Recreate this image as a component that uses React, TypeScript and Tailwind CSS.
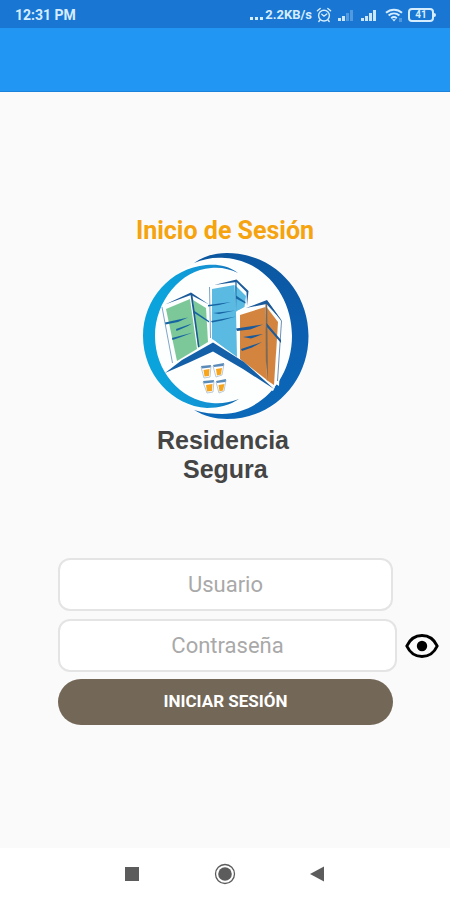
import { useState } from 'react';

function AlarmIcon() {
  return (
    <svg viewBox="0 0 16 16" className="h-4 w-4" fill="none" stroke="currentColor" strokeWidth="1.4" strokeLinecap="round">
      <circle cx="8" cy="8.6" r="5.4" />
      <path d="M1.4 3.8 4.2 1.5M14.6 3.8 11.8 1.5M3.8 13.2 2.8 14.5M12.2 13.2l1 1.3" />
      <path d="M5.8 7.2 8 9.2l2.8-2.2" />
    </svg>
  );
}

function SignalIcon({ level }: { level: number }) {
  const bars = [
    { x: 0, h: 3 },
    { x: 4, h: 5 },
    { x: 8, h: 8 },
    { x: 12, h: 11 },
  ];

  return (
    <svg viewBox="0 0 16 12" className="h-3 w-4" fill="currentColor">
      {bars.map((bar, i) => (
        <rect key={bar.x} x={bar.x} y={12 - bar.h} width="3" height={bar.h} opacity={i < level ? 0.95 : 0.3} />
      ))}
    </svg>
  );
}

function WifiIcon() {
  return (
    <svg viewBox="0 0 18 14" className="h-[14px] w-[18px]" fill="none" stroke="currentColor" strokeWidth="2">
      <path d="M1 4.8c4.6-4.2 11.4-4.2 16 0" />
      <path d="M3.6 7.6c3.2-2.8 7.6-2.8 10.8 0" />
      <path d="M6.2 10.2c1.7-1.4 3.9-1.4 5.6 0" />
      <path d="M7 11.2 9 13.6l2-2.4z" fill="currentColor" stroke="none" />
      <path d="M14 11h3M14 13h3" strokeWidth="1" opacity=".6" />
    </svg>
  );
}

function Battery({ percent }: { percent: number }) {
  return (
    <span className="flex items-center">
      <span className="flex h-[14px] w-[26px] items-center justify-center rounded-[4px] border-2 border-current text-[10px] leading-none font-bold">
        {percent}
      </span>
      <span className="h-1 w-[2px] rounded-r bg-current" />
    </span>
  );
}

function StatusBar() {
  return (
    <div className="flex h-7 items-center justify-between bg-[#1976d2] pt-[2px] pr-[14px] pl-[15px] text-[#d6edff]">
      <span className="text-[14px] leading-4 font-bold">12:31 PM</span>
      <div className="flex items-center gap-1">
        <span className="flex items-center">
          <svg viewBox="0 0 16 14" className="h-[14px] w-4" fill="currentColor">
            <path d="M1 9h3v3H1zM6 9h3v3H6zM11 9h3v3h-3z" />
          </svg>
          <span className="text-[13px] leading-4 font-bold">2.2KB/s</span>
        </span>
        <AlarmIcon />
        <span className="flex gap-[7px] pl-[2px]">
          <SignalIcon level={2} />
          <SignalIcon level={4} />
        </span>
        <span className="flex items-center gap-[5px] pl-1">
          <WifiIcon />
          <Battery percent={41} />
        </span>
      </div>
    </div>
  );
}

function Logo() {
  return (
    <svg viewBox="139 250 172 172" className="h-[172px] w-[172px]" aria-hidden="true">
      <defs>
        <linearGradient id="leftRing" x1="0" y1="0" x2="1" y2="0">
          <stop offset="0.2" stopColor="#0ba3dc" />
          <stop offset="0.75" stopColor="#1590d2" />
          <stop offset="1" stopColor="#0c5da8" />
        </linearGradient>
        <linearGradient id="rightRing" x1="0" y1="0" x2="0" y2="1">
          <stop offset="0" stopColor="#0b569f" />
          <stop offset="0.5" stopColor="#0c60b2" />
          <stop offset="1" stopColor="#0b68b8" />
        </linearGradient>
      </defs>

      <circle cx="226" cy="336" r="79" fill="#fdfefe" />

      {/* rings */}
      <path
        d="M238 273C227 265 217 264 206 265C171 268 143 299 143 336C143 374 172 406 207 408C219 408 230 405 239 399C228 403 220 404 212 403C180 400 155 371 155 336C155 301 181 270 211 268C221 267 230 269 238 273Z"
        fill="url(#leftRing)"
      />
      <path
        d="M194 263C204 256 215 253 227 253C273 253 308.5 290 308.5 336C308.5 382 273 419 227 419C215 419 204 416 194 410C204 413 213 414 222 414C262 413 292 378 292 336C292 294 262 260 225 258C213 257 204 259 194 263Z"
        fill="url(#rightRing)"
      />

      {/* green building */}
      <path d="M166 309 190 299 197 349 177 361Z" fill="#7cc899" />
      <path d="M193 300 206 308 208 342 198 348Z" fill="#7cc899" />
      <path d="M165 304.5 191 292.5 209 304.5 191 295Z" fill="#1b5a9b" />
      <path d="M190.3 293 192.3 294 199.5 347 198 347Z" fill="#1a5a96" />
      <path d="M162 307 172.5 363" fill="none" stroke="#5d8fbd" strokeWidth=".8" />
      <path d="M193 310 209 321V322.5L193.5 312.5Z" fill="#1764a3" />
      <path d="M165 322.5 188 317.5 178 322 165.5 324.5Z" fill="#1764a3" />
      <path d="M176 329 192 323.5 188 326 176.5 331Z" fill="#1764a3" />
      <path d="M172 338 193 332.5 181 337 172.5 340Z" fill="#1764a3" />

      {/* blue building */}
      <path d="M212 289 234.5 285 236 312 237 357 212 339Z" fill="#5abae2" />
      <path d="M235 285 246 296 244.5 307 235.5 312Z" fill="#5abae2" />
      <path d="M214 285 236.5 279.5 248.5 291 247 306 246.5 292 236.5 282Z" fill="#1b5a9b" />
      <path d="M209.5 287 210.5 338" fill="none" stroke="#5d8fbd" strokeWidth=".8" />
      <path d="M235.3 281 236.7 281 236 312Z" fill="#1764a3" />
      <path d="M236 295.5 245.5 302V303.5L236 298.5Z" fill="#1764a3" />
      <path d="M208 305 231 302 219 305 208 306.5Z" fill="#1764a3" />
      <path d="M213 313 235 310.5 219 314Z" fill="#1764a3" />
      <path d="M211 321 236 316.5 222 320.5 212 322.5Z" fill="#1764a3" />

      {/* orange building */}
      <path d="M237 311 267 298 283 320 279 386 237 359Z" fill="#fdfefe" />
      <path d="M240 315 265.5 307 267 380 240 359Z" fill="#d3853f" />
      <path d="M266.5 307 278 322 274 385 266.5 380Z" fill="#d3853f" />
      <path d="M267 301 281.5 321 277.5 381" fill="none" stroke="#5c82aa" strokeWidth=".9" />
      <path d="M246 308 267 300 282 321 266.5 304Z" fill="#1b5a9b" />
      <path d="M265.5 304 267.2 304 268 381 265.8 360Z" fill="#7c6a58" />
      <path d="M266.5 323 281 340V343L267 327Z" fill="#1b5a9b" />
      <path d="M236 328.5 263 324.5 250 329.5 237 331Z" fill="#1b5a9b" />
      <path d="M243 337 263 334 251 338.5Z" fill="#1b5a9b" />
      <path d="M241 349 262 342 252 347.5 242 351Z" fill="#1b5a9b" />

      {/* roof */}
      <path d="M166 371 213 339.500 275 387 273 391 214 360 168 376Z" fill="#fdfefe" />
      <path d="M165 373 182 360 213 342.5 244 362 274 389 243 369 213 351.5 188 363Z" fill="#135fa8" />

      {/* windows */}
      <g fill="#fff" stroke="#a9bccb" strokeWidth=".8">
        <path d="M201 367 211 366 210 377 204 378Z" />
        <path d="M213 366 224 364 222 375 216 377Z" />
        <path d="M203 382 214 381 213 392 207 393Z" />
        <path d="M216 382 226 380 224 391 219 393Z" />
      </g>
      <path
        d="M201 366 211 365 210.5 367.5 202 368.5ZM213 365 224 363 223.5 366 214 367ZM203 381 214 380 213.5 382.5 204 383.5ZM216 381 226 379 225.5 382 217 383Z"
        fill="#5a8bb8"
      />
      <path
        d="M203.5 370 209.5 369 209 376 204.5 376.5ZM216 369 222 368 221 374.5 217 375.5ZM206 385 212.5 384 212 391 207 391.5ZM218.5 385 224.5 384 223 390.5 219.5 391.5Z"
        fill="#f6a51c"
      />
    </svg>
  );
}

function EyeIcon() {
  return (
    <svg viewBox="0 0 34 26" className="h-[26px] w-[34px]" fill="none">
      <path
        d="M1.8 13C5 6 10.5 2.5 17 2.5S29 6 32.2 13C29 20 23.5 23.5 17 23.5S5 20 1.8 13Z"
        stroke="#000"
        strokeWidth="3"
        strokeLinejoin="round"
      />
      <circle cx="17" cy="13" r="5.2" fill="#000" />
    </svg>
  );
}

function LoginForm() {
  const [showPassword, setShowPassword] = useState(false);

  return (
    <form className="mt-[74px] w-full pr-[11px] pl-[58px]" onSubmit={(e) => e.preventDefault()}>
      <div className="mb-2 pr-[46px]">
        <input
          type="text"
          aria-label="Usuario"
          placeholder="Usuario"
          className="block h-[53px] w-full rounded-[12px] border-2 border-[#e4e4e4] bg-white text-center text-[22px] text-[#444] outline-none placeholder:text-[#a9a9a9]"
        />
      </div>
      <div className="mb-[7px] flex items-center gap-2">
        <input
          type={showPassword ? 'text' : 'password'}
          aria-label="Contraseña"
          placeholder="Contraseña"
          className="block h-[53px] min-w-0 flex-1 rounded-[12px] border-2 border-[#e4e4e4] bg-white text-center text-[22px] text-[#444] outline-none placeholder:text-[#a9a9a9]"
        />
        <button type="button" aria-label="Mostrar contraseña" onClick={() => setShowPassword(!showPassword)}>
          <EyeIcon />
        </button>
      </div>
      <div className="pr-[46px]">
        <button type="submit" className="h-[46px] w-full rounded-full bg-[#736757] text-[17px] font-bold text-white">
          INICIAR SESIÓN
        </button>
      </div>
    </form>
  );
}

function NavigationBar() {
  return (
    <nav className="flex h-[52px] items-center justify-center gap-[73px] bg-white text-[#5c5c5c]">
      <button type="button" aria-label="Recientes">
        <svg viewBox="0 0 18 22" className="h-[22px] w-[18px]" fill="currentColor">
          <path d="M2 4h14v14H2z" />
        </svg>
      </button>
      <button type="button" aria-label="Inicio">
        <svg viewBox="0 0 22 22" className="h-[22px] w-[22px]" fill="currentColor">
          <circle cx="11" cy="11" r="9.5" fill="none" stroke="currentColor" strokeWidth="1.3" />
          <circle cx="11" cy="11" r="6.8" />
        </svg>
      </button>
      <button type="button" aria-label="Atrás">
        <svg viewBox="0 0 18 22" className="h-[22px] w-[18px]" fill="currentColor">
          <path d="M15 3.5v15L1 11z" />
        </svg>
      </button>
    </nav>
  );
}

export default function App() {
  return (
    <div className="flex min-h-screen flex-col bg-[#fafafa] font-[Roboto,sans-serif]">
      <StatusBar />
      <header className="h-16 border-b border-[#1b82dc] bg-[#2196f3]" />

      <main className="flex flex-1 flex-col items-center justify-center">
        <h1 className="text-[25px] leading-8 font-bold text-[#f5a30f]">Inicio de Sesión</h1>
        <div className="flex flex-col items-center pt-[3px]">
          <Logo />
          <p className="mt-1 pr-1 font-['Liberation_Sans',sans-serif] text-[25px] leading-[29px] font-bold text-[#454545]">
            <span className="block">Residencia</span>
            <span className="block pl-[26px]">Segura</span>
          </p>
        </div>
        <LoginForm />
      </main>

      <NavigationBar />
    </div>
  );
}
